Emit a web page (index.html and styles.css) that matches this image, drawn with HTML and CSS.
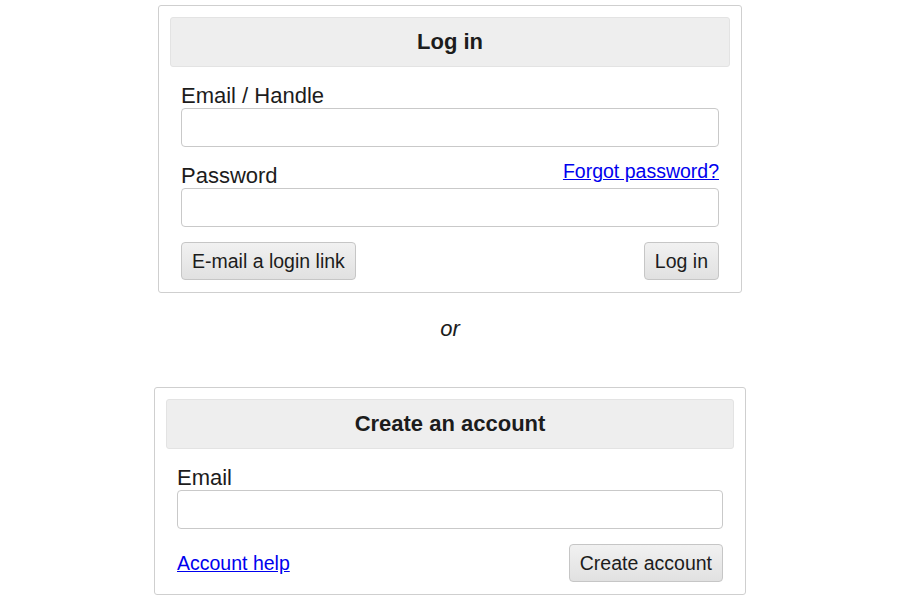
FILE: index.html
```html
<!DOCTYPE html>
<html lang="en">
<head>
<meta charset="utf-8">
<title>Log in</title>
<link rel="stylesheet" href="styles.css">
</head>
<body>
<main class="page">
  <section class="panel panel-login">
    <h2 class="panel-title">Log in</h2>
    <form class="panel-form">
      <div class="field">
        <div class="field-label-row">
          <label class="field-label" for="handle">Email / Handle</label>
        </div>
        <input class="text-input" id="handle" type="text">
      </div>
      <div class="field">
        <div class="field-label-row">
          <label class="field-label" for="password">Password</label>
          <a class="link link-small link-raised" href="#">Forgot password?</a>
        </div>
        <input class="text-input" id="password" type="password">
      </div>
      <div class="actions">
        <button class="btn" type="button">E-mail a login link</button>
        <button class="btn" type="submit">Log in</button>
      </div>
    </form>
  </section>

  <p class="divider">or</p>

  <section class="panel panel-create">
    <h2 class="panel-title">Create an account</h2>
    <form class="panel-form">
      <div class="field">
        <div class="field-label-row">
          <label class="field-label" for="email">Email</label>
        </div>
        <input class="text-input" id="email" type="email">
      </div>
      <div class="actions">
        <a class="link link-small" href="#">Account help</a>
        <button class="btn" type="submit">Create account</button>
      </div>
    </form>
  </section>
</main>
</body>
</html>
```

FILE: styles.css
```css
* {
  box-sizing: border-box;
}

html, body {
  margin: 0;
  padding: 0;
  background: #ffffff;
}

body {
  font-family: "Liberation Sans", Arial, Helvetica, sans-serif;
  font-size: 22px;
  color: #1c1c1c;
}

.page {
  display: flex;
  flex-direction: column;
  align-items: center;
  padding-top: 5px;
}

.panel {
  border: 1px solid #cfcfcf;
  border-radius: 3px;
  padding: 11px;
  background: #fff;
}

.panel-login {
  width: 584px;
}

.panel-create {
  width: 592px;
}

.panel-title {
  margin: 0;
  height: 50px;
  display: flex;
  align-items: center;
  justify-content: center;
  background: #eeeeee;
  border: 1px solid #e3e3e3;
  border-radius: 3px;
  font-size: 22px;
  font-weight: bold;
  color: #1c1c1c;
}

.panel-form {
  display: flex;
  flex-direction: column;
  gap: 16px;
  padding: 16px 11px 1px;
  margin: 0;
}

.field {
  display: flex;
  flex-direction: column;
}

.field-label-row {
  display: flex;
  justify-content: space-between;
  align-items: flex-start;
  height: 25px;
}

.field-label {
  font-size: 22px;
  line-height: 25px;
}

.text-input {
  display: block;
  width: 100%;
  height: 39px;
  border: 1px solid #c9c9c9;
  border-radius: 4px;
  background: #fff;
  font-family: inherit;
  font-size: 19px;
  padding: 0 8px;
  margin: 0;
}

.actions {
  display: flex;
  justify-content: space-between;
  align-items: center;
  margin-top: -1px;
}

.btn {
  height: 38px;
  padding: 0 10px;
  border: 1px solid #c6c6c6;
  border-radius: 4px;
  background: linear-gradient(#f1f1f1, #e1e1e1);
  font-family: inherit;
  font-size: 19.5px;
  color: #1c1c1c;
  margin: 0;
}

.link {
  color: #0000ee;
  text-decoration: underline;
}

.link-small {
  font-size: 19.5px;
  line-height: 22px;
}

.link-raised {
  margin-top: -3px;
}

.divider {
  margin: 23px 0 46px;
  font-style: italic;
  font-size: 22px;
  line-height: 25px;
  color: #1c1c1c;
}
```
